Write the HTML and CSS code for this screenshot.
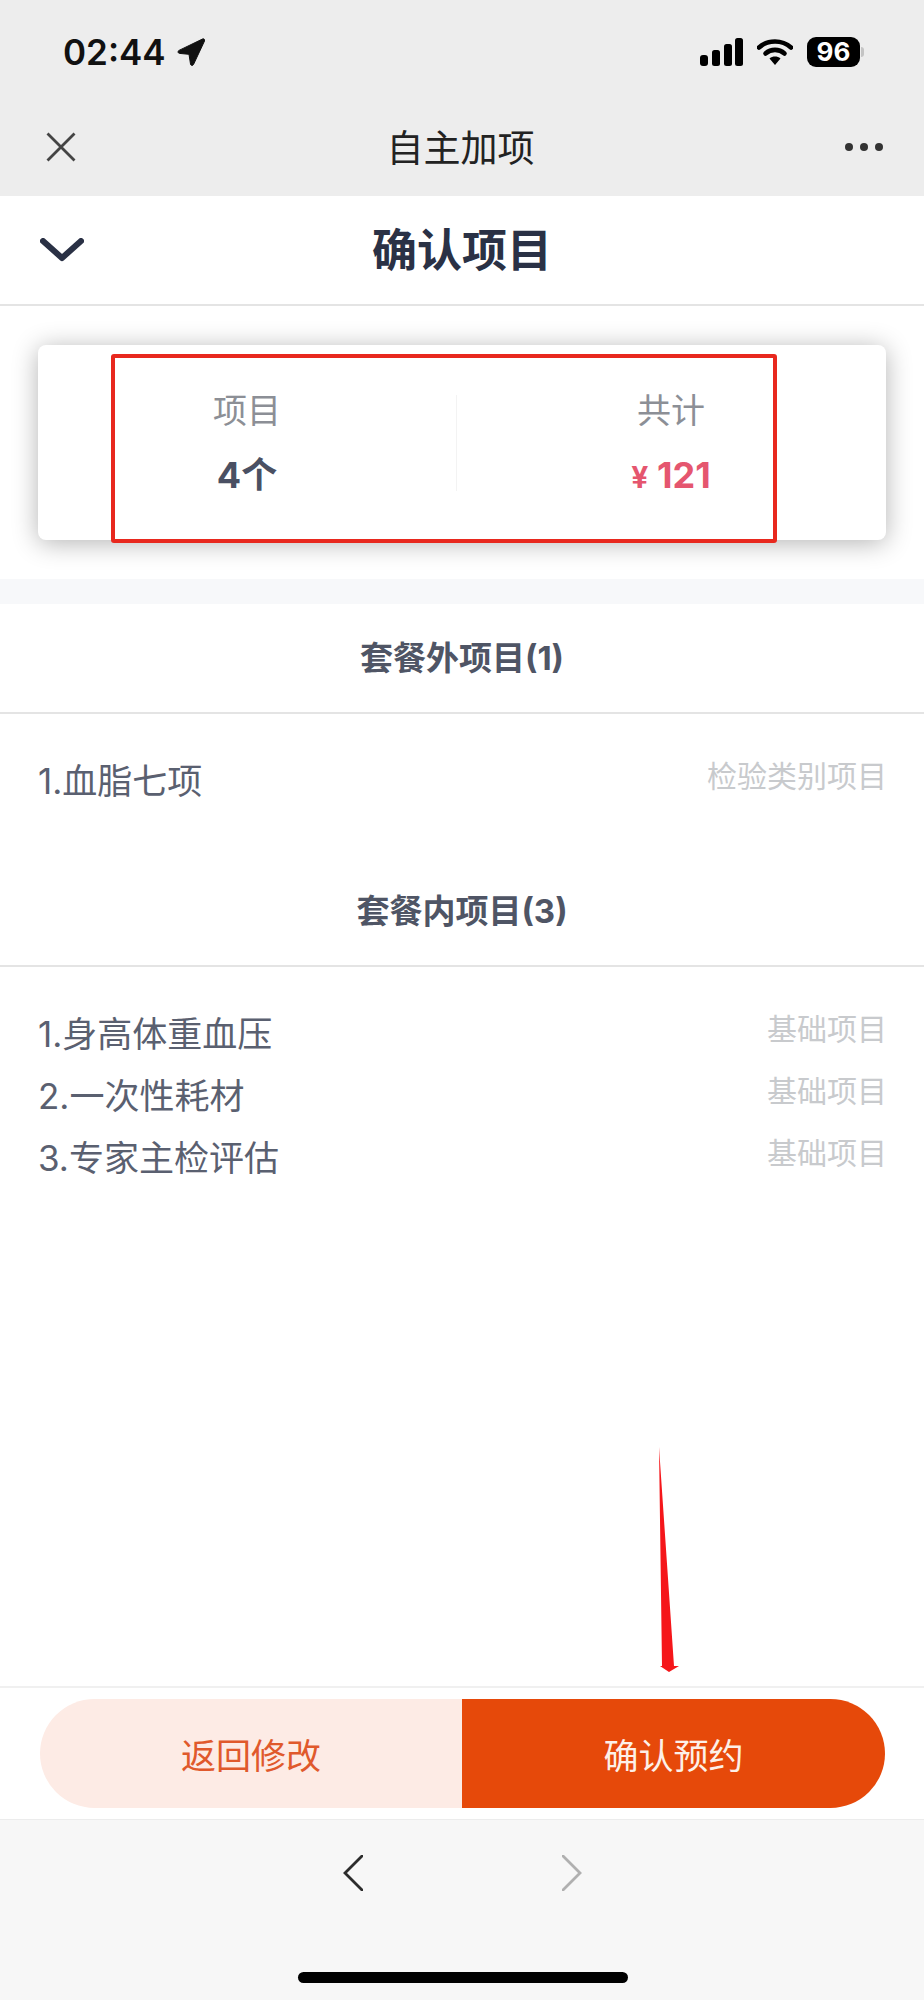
FILE: index.html
```html
<!DOCTYPE html>
<html lang="zh-CN">
<head>
    <meta charset="UTF-8">
    <meta name="viewport" content="width=device-width, initial-scale=1.0">
    <title>自主加项</title>
    <link rel="stylesheet" href="styles.css">
</head>
<body>
    <header class="top-bar">
        <div class="status-bar">
            <div class="status-time">
                <span>02:44</span>
                <svg class="icon-location" viewBox="0 0 28 28"><path d="M25.500 1 2 12.400c-1.600.8-1.200 2.800.5 3l9.500.9 1.500 9.700c.3 1.700 2.300 2 3 .5L27.500 3c.6-1.400-.7-2.600-2-2z"/></svg>
            </div>
            <div class="status-icons">
                <svg class="icon-signal" viewBox="0 0 43 28">
                    <rect x="0" y="17" width="8" height="11" rx="3"/>
                    <rect x="12" y="12" width="8" height="16" rx="2.500"/>
                    <rect x="24" y="6" width="8" height="22" rx="2.500"/>
                    <rect x="35" y="0" width="8" height="28" rx="2.500"/>
                </svg>
                <svg class="icon-wifi" viewBox="0 0 36 28">
                    <path d="M2 9.500C11 1.500 25 1.500 34 9.500" fill="none" stroke="#000" stroke-width="4.600" stroke-linecap="round"/>
                    <path d="M8.500 15.500c5.500-4.800 13.500-4.800 19 0" fill="none" stroke="#000" stroke-width="4.600" stroke-linecap="round"/>
                    <path d="M12.500 20.500c3.300-2.600 7.700-2.600 11 0L18 27z"/>
                </svg>
                <div class="battery">
                    <span class="battery-level">96</span>
                    <span class="battery-cap"></span>
                </div>
            </div>
        </div>
        <div class="title-bar">
            <svg class="icon-close" viewBox="0 0 30 30"><path d="M1.500 1.500 28.500 28.500M28.500 1.500 1.500 28.500"/></svg>
            <h1>自主加项</h1>
            <div class="more-dots"><i></i><i></i><i></i></div>
        </div>
    </header>

    <main class="sheet">
        <div class="sheet-head">
            <svg class="icon-down" viewBox="0 0 44 24"><path d="M3 3 22 20 41 3"/></svg>
            <h2>确认项目</h2>
        </div>

        <section class="summary">
            <div class="summary-card">
                <div class="summary-col">
                    <div class="summary-label">项目</div>
                    <div class="summary-value">4个</div>
                </div>
                <div class="summary-col">
                    <div class="summary-label">共计</div>
                    <div class="summary-value price"><small>¥</small> 121</div>
                </div>
                <div class="mark-box"></div>
            </div>
        </section>

        <section class="group">
            <h3 class="group-title">套餐外项目(1)</h3>
            <ul class="item-list outer">
                <li class="item"><span>1.血脂七项</span><span class="item-tag">检验类别项目</span></li>
            </ul>
        </section>

        <section class="group">
            <h3 class="group-title">套餐内项目(3)</h3>
            <ul class="item-list">
                <li class="item"><span>1.身高体重血压</span><span class="item-tag">基础项目</span></li>
                <li class="item"><span>2.一次性耗材</span><span class="item-tag">基础项目</span></li>
                <li class="item"><span>3.专家主检评估</span><span class="item-tag">基础项目</span></li>
            </ul>
        </section>

        <svg class="mark-arrow" viewBox="0 0 24 228"><path d="M4 0 7 219H5L14 225 24 219H19z"/></svg>
    </main>

    <footer class="action-bar">
        <button class="btn btn-back">返回修改</button>
        <button class="btn btn-confirm">确认预约</button>
    </footer>

    <nav class="bottom-nav">
        <div class="nav-arrows">
            <svg class="icon-nav" viewBox="0 0 20 36"><path d="M19 1 2 18 19 35"/></svg>
            <svg class="icon-nav disabled" viewBox="0 0 20 36"><path d="M1 1 18 18 1 35"/></svg>
        </div>
        <div class="home-bar"></div>
    </nav>
</body>
</html>
```

FILE: styles.css
```css
* {
    box-sizing: border-box;
}
body {
    margin: 0;
    height: 2000px;
    display: flex;
    flex-direction: column;
    background-color: white;
    font-family: Inter, "Noto Sans CJK SC", sans-serif;
    color: #5a6070;
}
h1, h2, h3, ul {
    margin: 0;
    padding: 0;
}
ul {
    list-style: none;
}

/* top bar */
.top-bar {
    height: 196px;
    flex-shrink: 0;
    background-color: #ededed;
}
.status-bar {
    height: 98px;
    padding: 36px 64px 0 63px;
    display: flex;
    justify-content: space-between;
    align-items: flex-start;
}
.status-time {
    display: flex;
    align-items: center;
    gap: 11px;
    height: 32px;
    font-size: 35px;
    font-weight: 600;
    color: #111;
}
.icon-location {
    width: 28px;
    height: 28px;
    fill: #111;
    stroke: #111;
    stroke-width: 1;
}
.status-icons {
    display: flex;
    align-items: center;
    gap: 14px;
    height: 32px;
    margin-right: -4px;
}
.icon-signal {
    width: 43px;
    height: 28px;
}
.icon-wifi {
    width: 36px;
    height: 28px;
}
.battery {
    display: flex;
    align-items: center;
    gap: 1px;
}
.battery-level {
    width: 53px;
    height: 30px;
    border-radius: 9px;
    background-color: #000;
    color: white;
    font-size: 26px;
    font-weight: 700;
    line-height: 30px;
    text-align: center;
}
.battery-cap {
    width: 3px;
    height: 10px;
    border-radius: 0 3px 3px 0;
    background-color: #c4c4c4;
}
.title-bar {
    height: 98px;
    padding: 0 41px 0 46px;
    display: flex;
    align-items: center;
    justify-content: space-between;
}
.title-bar h1 {
    font-size: 37px;
    font-weight: 400;
    color: #222;
    margin-top: -2px;
}
.icon-close {
    width: 30px;
    height: 30px;
    fill: none;
    stroke: #444;
    stroke-width: 2.800;
}
.more-dots {
    display: flex;
    gap: 7px;
}
.more-dots i {
    width: 8px;
    height: 8px;
    border-radius: 50%;
    background-color: #333;
}

/* sheet */
.sheet {
    position: relative;
    flex: 1;
    min-height: 0;
}
.sheet-head {
    position: relative;
    height: 110px;
    padding-bottom: 6px;
    display: flex;
    align-items: center;
    justify-content: center;
    border-bottom: 2px solid #e4e4e4;
}
.sheet-head h2 {
    font-size: 45px;
    font-weight: 700;
    color: #2a3145;
}
.icon-down {
    position: absolute;
    left: 40px;
    top: 42px;
    width: 44px;
    height: 24px;
    fill: none;
    stroke: #2a3145;
    stroke-width: 6;
    stroke-linecap: round;
    stroke-linejoin: round;
}
.summary {
    height: 298px;
    padding: 39px 38px 0 38px;
    border-bottom: 25px solid #f7f8fa;
}
.summary-card {
    position: relative;
    height: 195px;
    display: flex;
    border-radius: 8px;
    background-color: white;
    box-shadow: 0 3px 26px rgba(0, 0, 0, 0.3);
}
.summary-col {
    flex: 1;
    display: flex;
    flex-direction: column;
    align-items: center;
    padding-top: 44px;
}
.summary-col:first-child {
    flex: none;
    width: 418px;
}
.summary-col + .summary-col {
    position: relative;
}
.summary-col + .summary-col::before {
    content: "";
    position: absolute;
    left: 0;
    top: 50px;
    width: 1px;
    height: 96px;
    background-color: #f3f3f3;
}
.summary-label {
    font-size: 34px;
    line-height: 44px;
    color: #8c8f96;
}
.summary-value {
    margin-top: 20px;
    font-size: 36px;
    font-weight: 700;
    line-height: 44px;
    color: #4a5063;
}
.summary-value.price {
    color: #e5566f;
}
.summary-value small {
    font-size: 30px;
}
.mark-box {
    position: absolute;
    left: 73px;
    top: 9px;
    width: 666px;
    height: 189px;
    border: 4px solid #e8281e;
    border-radius: 3px;
}
.group-title {
    height: 110px;
    padding-top: 1px;
    border-bottom: 2px solid #e4e4e4;
    font-size: 33px;
    font-weight: 700;
    line-height: 107px;
    text-align: center;
    color: #4f5565;
}
.item-list {
    padding: 33px 37px 0 38px;
}
.item-list.outer {
    height: 143px;
}
.item {
    height: 62px;
    display: flex;
    align-items: center;
    justify-content: space-between;
    font-size: 35px;
}
.item-tag {
    padding-bottom: 8px;
    font-size: 30px;
    color: #c8cacd;
}
.mark-arrow {
    position: absolute;
    left: 655px;
    top: 1251px;
    width: 24px;
    height: 228px;
    fill: #f5161a;
}

/* buttons */
.action-bar {
    height: 134px;
    flex-shrink: 0;
    display: flex;
    align-items: center;
    padding: 0 39px 0 40px;
    border-top: 2px solid #f0f0f0;
    border-bottom: 1px solid #ececec;
}
.btn {
    height: 109px;
    border: none;
    font-family: inherit;
    font-size: 35px;
}
.btn-back {
    width: 422px;
    border-radius: 55px 0 0 55px;
    background-color: #fdebe5;
    color: #e0592c;
}
.btn-confirm {
    flex: 1;
    border-radius: 0 55px 55px 0;
    background-color: #e6490a;
    color: #fdf0e8;
}

/* bottom nav */
.bottom-nav {
    height: 180px;
    flex-shrink: 0;
    display: flex;
    flex-direction: column;
    align-items: center;
    padding-top: 35px;
    background-color: #f7f7f7;
}
.nav-arrows {
    display: flex;
    gap: 199px;
}
.icon-nav {
    width: 20px;
    height: 36px;
    fill: none;
    stroke: #2c2c2c;
    stroke-width: 2.800;
    stroke-linecap: round;
}
.icon-nav.disabled {
    stroke: #b0b0b0;
}
.home-bar {
    width: 330px;
    height: 11px;
    margin-top: 81px;
    margin-left: 1px;
    border-radius: 6px;
    background-color: #000;
}
```
